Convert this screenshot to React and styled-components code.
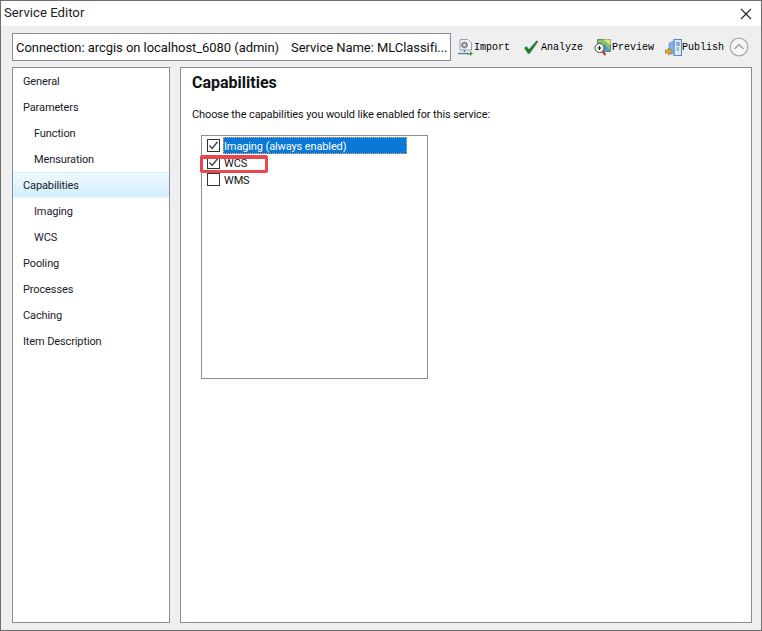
import React from 'react';
import styled, { createGlobalStyle } from 'styled-components';

const Global = createGlobalStyle`
  html, body { margin: 0; padding: 0; background: #efefef; }
  * { box-sizing: border-box; }
`;
const Window = styled.div`
  width: 762px; height: 631px; display: flex; flex-direction: column;
  background: #efefef; border: 1px solid #6e6e6e;
  font-family: Roboto, "Noto Sans", sans-serif; color: #111; overflow: hidden; position: relative;
`;
const TopStrip = styled.div`
  position: absolute; top: -1px; left: 114px; width: 188px; height: 1px; background: #3a1a66;
`;
const TitleBar = styled.div`
  height: 25px; flex: none; background: #fff; display: flex; align-items: center; justify-content: space-between;
  padding: 0 9px 3px 3px; font-size: 13.2px; color: #222;
`;
const Close = styled.svg` width: 12px; height: 12px; margin-top: 3px; `;
const Toolbar = styled.div`
  height: 41px; flex: none; display: flex; align-items: flex-start; padding: 7px 0 0 11px;
`;
const ConnectionBox = styled.div`
  width: 439px; height: 28px; background: #fff; border: 1px solid #8b8b99; display: flex; align-items: center;
  padding-left: 3px; font-size: 13px; letter-spacing: -0.05px; color: #111; white-space: nowrap; gap: 12px;
`;
const Tools = styled.div`
  display: flex; align-items: center; height: 28px; margin-left: 6px; 
`;
const Tool = styled.div`
  display: flex; align-items: center; gap: ${p => p.$gap ?? 1}px; margin-right: ${p => p.$mr ?? 11}px;
  font-family: "Liberation Mono", monospace; font-size: 10px; color: #000;
`;
const Collapse = styled.svg` width: 20px; height: 20px; margin-left: -6px; `;
const Body = styled.div`
  flex: 1; display: flex; gap: 10px; padding: 0 9px 7px 11px; min-height: 0;
`;
const Side = styled.nav`
  width: 158px; background: #fff; border: 1px solid #8b8b99;
`;
const NavRow = styled.div`
  height: 26px; display: flex; align-items: center; font-size: 11px; letter-spacing: -0.12px; color: #1a1a2a;
  padding-left: ${p => (p.$sub ? 21 : 10)}px;
  ${p => p.$active && `
    background: linear-gradient(#eef9ff, #d3eefd);
    border-top: 1px solid #d0effd; border-bottom: 1px solid #e6f6fe; 
  `}
`;
const Main = styled.main`
  flex: 1; background: #fff; border: 1px solid #8b8b99; padding: 5px 11px; position: relative;
`;
const Heading = styled.h1`
  margin: 0; font-size: 16px; font-weight: 700; line-height: 20px; color: #111;
`;
const Prompt = styled.p`
  margin: 14px 0 0; font-size: 11px; letter-spacing: -0.11px; line-height: 16px; color: #111;
`;
const ListBox = styled.div`
  margin: 12px 0 0 9px; width: 227px; height: 244px; border: 1px solid #8b8b99; padding: 1px 0 0 5px; position: relative;
`;
const Item = styled.div`
  height: 17px; display: flex; align-items: center; gap: 2px; font-size: 11px; letter-spacing: -0.12px;
`;
const Box = styled.span`
  width: 13px; height: 13px; border: 1px solid #333; display: flex; align-items: center; justify-content: center; background: #fff; flex: none; margin-right: 1px;
`;
const Label = styled.span`
  height: 17px; display: flex; align-items: center; padding: 1px 0 0 1px;
  ${p => p.$selected && `
    width: 184px; background: #0a78d7; color: #fff; outline: 1px dotted #f0b060; outline-offset: -1px;
  `}
`;
const Highlight = styled.div`
  position: absolute; left: -2px; top: 19px; width: 68px; height: 18px; border-style: solid; border-color: #e8474c; border-width: 4px 3px 3px; border-radius: 2px;
`;

const Check = () => (
  <svg width="11" height="11" viewBox="0 0 11 11"><path d="M1.5 5.5 L4.2 8.5 L9.5 1.8" fill="none" stroke="#444" strokeWidth="1.4" /></svg>
);
const CheckItem = ({ checked, selected, children }) => (
  <Item><Box>{checked && <Check />}</Box><Label $selected={selected}>{children}</Label></Item>
);

const ImportIcon = () => (
  <svg width="16" height="17" viewBox="0 0 16 17">
    <path d="M3 .5H11L14.5 4V11H3Z" fill="#f2f5fa" stroke="#8fa0b8" />
    <circle cx="7.5" cy="6" r="3" fill="#9a9a9a" stroke="#666" strokeDasharray="1.5 .7" />
    <circle cx="7.5" cy="6" r="1" fill="#eee" />
    <path d="M7.5 11V13M1 14.5H11" stroke="#5f7f9f" strokeWidth="1.4" />
    <path d="M10 14H13V12L16 14.5L13 17V15.5H10Z" fill="#3da04a" />
  </svg>
);
const AnalyzeIcon = () => (
  <svg width="16" height="16" viewBox="0 0 16 16">
    <path d="M1 9 L3.5 7 L6 10 L13.5 1.5 L15.5 2.5 L6.5 15 H5 Z" fill="#1e7a35" stroke="#cfd8cf" strokeWidth=".5" />
  </svg>
);
const PreviewIcon = () => (
  <svg width="17" height="17" viewBox="0 0 17 17">
    <rect x="3.5" y=".5" width="13" height="12" fill="#7fc36a" stroke="#6d7f8c" />
    <path d="M9 .5L16.5 .5V6Z" fill="#e9e27a" /><path d="M4 12L11 5L16 12Z" fill="#49a0c0" />
    <circle cx="5.5" cy="9" r="4.5" fill="#fff" stroke="#444" />
    <path d="M3.5 9H7.5M5.5 7V11" stroke="#222" strokeWidth="1.2" />
    <path d="M8.5 12.5L11.5 16" stroke="#b33" strokeWidth="2" />
  </svg>
);
const PublishIcon = () => (
  <svg width="17" height="17" viewBox="0 0 17 17">
    <rect x="9" y=".5" width="7.5" height="16" fill="#dbe8fa" stroke="#5a82c8" />
    <path d="M4 4L9 2V15H4Z" fill="#7fb0e8" stroke="#5a82c8" strokeWidth=".6" />
    <path d="M11 4H15M11 6H15" stroke="#4a72b8" /><path d="M11.5 9H14M11.5 11H14" stroke="#40b060" strokeWidth="1.2" />
    <path d="M0 11H3.5V9L7.5 12.5L3.5 16V14H0Z" fill="#e0b030" stroke="#8a6a10" strokeWidth=".6" />
  </svg>
);

const nav = [
  ['General'], ['Parameters'], ['Function', 1], ['Mensuration', 1], ['Capabilities', 0, 1],
  ['Imaging', 1], ['WCS', 1], ['Pooling'], ['Processes'], ['Caching'], ['Item Description'],
];

export default function App() {
  return (
    <>
      <Global />
      <Window>
        <TopStrip />
        <TitleBar>
          <span>Service Editor</span>
          <Close viewBox="0 0 12 12"><path d="M1 1L11 11M11 1L1 11" stroke="#222" strokeWidth="1.1" /></Close>
        </TitleBar>
        <Toolbar>
          <ConnectionBox>
            <span>Connection: arcgis on localhost_6080 (admin)</span>
            <span>Service Name: MLClassifi...</span>
          </ConnectionBox>
          <Tools>
            <Tool $mr={13}><ImportIcon />Import</Tool>
            <Tool $mr={11} $gap={2}><AnalyzeIcon />Analyze</Tool>
            <Tool $mr={11}><PreviewIcon />Preview</Tool>
            <Tool $mr={11} $gap={0}><PublishIcon />Publish</Tool>
            <Collapse viewBox="0 0 20 20">
              <circle cx="10" cy="10" r="8.8" fill="#f6f6f6" stroke="#a8a8a8" strokeWidth="1.2" />
              <path d="M5.5 12L10 7.5L14.5 12" fill="none" stroke="#a0a0a0" strokeWidth="1.4" />
            </Collapse>
          </Tools>
        </Toolbar>
        <Body>
          <Side>
            {nav.map(([t, sub, active]) => <NavRow key={t} $sub={sub} $active={active}>{t}</NavRow>)}
          </Side>
          <Main>
            <Heading>Capabilities</Heading>
            <Prompt>Choose the capabilities you would like enabled for this service:</Prompt>
            <ListBox>
              <CheckItem checked selected>Imaging (always enabled)</CheckItem>
              <CheckItem checked>WCS</CheckItem>
              <CheckItem>WMS</CheckItem>
              <Highlight />
            </ListBox>
          </Main>
        </Body>
      </Window>
    </>
  );
}
